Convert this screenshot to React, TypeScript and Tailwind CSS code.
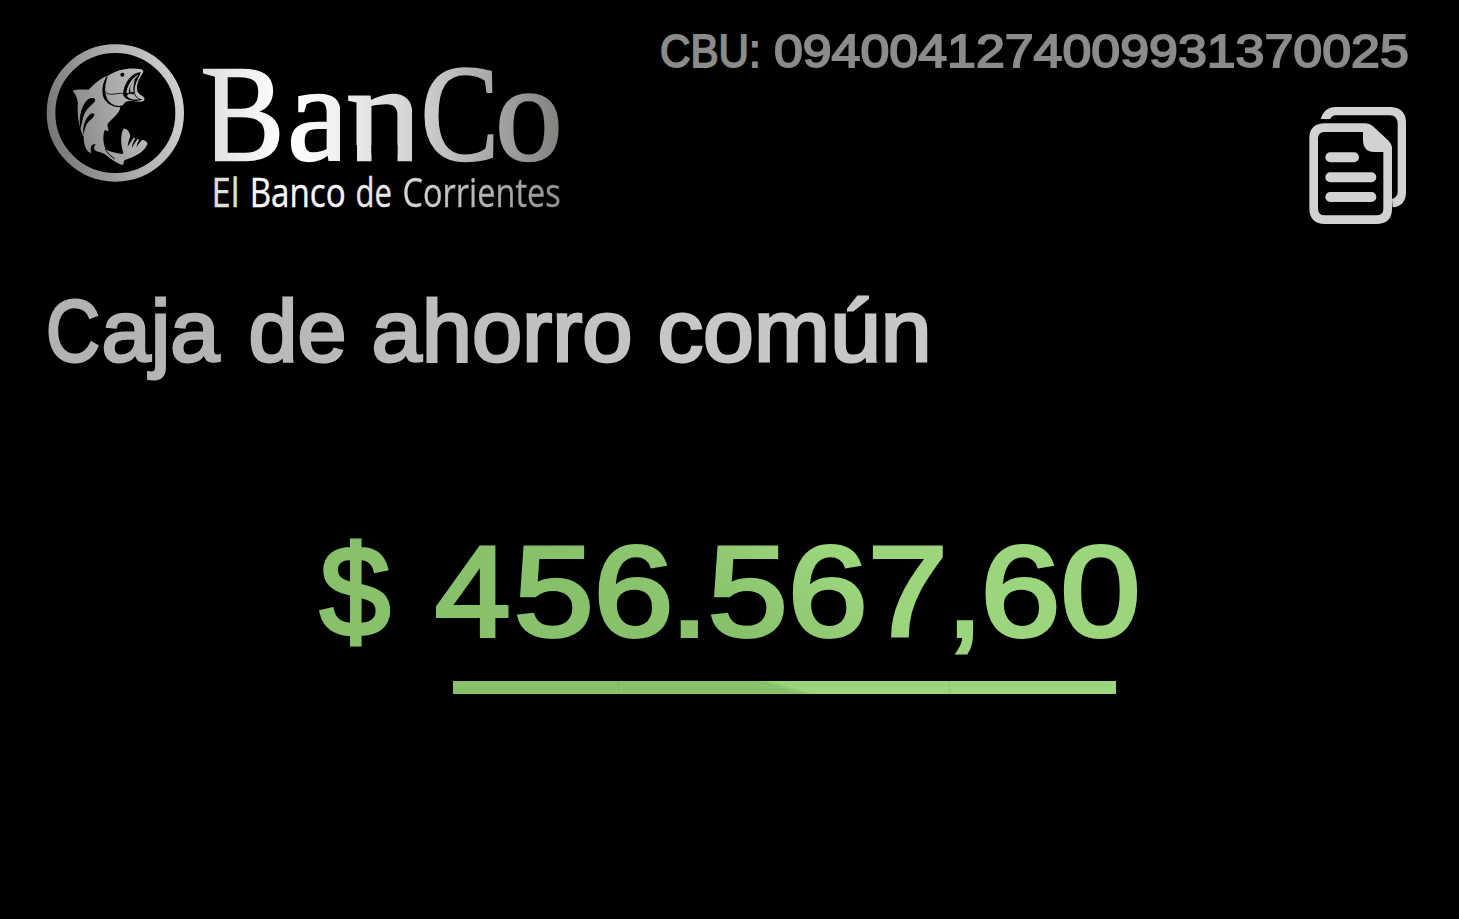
import { useLayoutEffect, useRef, useState } from "react";

type InkProps = { text: string; width: number; className?: string; box?: string };

/** Text stretched horizontally so that its visible glyphs fill `width` pixels. */
function Ink({ text, width, className = "", box = "" }: InkProps) {
  const ref = useRef<HTMLSpanElement>(null);
  const [transform, setTransform] = useState("none");

  useLayoutEffect(() => {
    const el = ref.current;
    const ctx = document.createElement("canvas").getContext("2d");
    if (!el || !ctx) return;
    const style = getComputedStyle(el);
    ctx.font = `${style.fontWeight} ${style.fontSize} ${style.fontFamily}`;
    const m = ctx.measureText(text);
    const stroke = parseFloat(style.getPropertyValue("-webkit-text-stroke-width")) || 0;
    const left = m.actualBoundingBoxLeft + stroke / 2;
    const ink = m.actualBoundingBoxLeft + m.actualBoundingBoxRight + stroke;
    const scale = width / ink;
    setTransform(`translateX(${left * scale}px) scaleX(${scale})`);
  }, [text, width]);

  return (
    <span className={`block h-fit shrink-0 ${box}`} style={{ width }}>
      <span
        ref={ref}
        className={`block w-max origin-left whitespace-pre leading-none ${className}`}
        style={{ transform }}
      >
        {text}
      </span>
    </span>
  );
}

const clip = "bg-clip-text text-transparent";

function FishMark() {
  return (
    <svg viewBox="0 0 450 450" className="h-[150px] w-[150px] shrink-0">
      <defs>
        <linearGradient id="ring" gradientUnits="userSpaceOnUse" x1="30" y1="270" x2="425" y2="180">
          <stop offset="0" stopColor="#787876" />
          <stop offset="0.5" stopColor="#a9a9a8" />
          <stop offset="1" stopColor="#d0d0cf" />
        </linearGradient>
      </defs>
      <circle cx="226" cy="225" r="193" fill="none" stroke="url(#ring)" strokeWidth="26" />
      <g fill="url(#ring)">
        <path d="M98 158C107 153 130 154 146 155C162 137 180 122 202 113C188 130 184 158 190 177C197 195 215 207 241 208C239 228 212 244 202 260L206 280L194 276C187 297 190 317 197 333C210 342 227 346 247 348L250 345C243 324 240 292 250 273C260 270 269 282 271 294C267 307 263 318 263 326C269 316 275 307 281 299L286 300C280 311 276 320 276 329C282 318 288 309 293 303L298 305C293 313 290 320 290 327C296 318 301 311 306 306C314 306 324 312 322 319C314 340 288 356 255 366C249 370 252 378 249 381C233 378 209 360 193 347C181 342 174 343 165 337C160 330 163 323 168 319C154 317 149 327 154 345C140 344 131 320 131 296C121 278 112 244 113 207C116 190 109 171 98 158Z" />
        <path d="M203 114C230 93 276 87 304 94L310 98C310 108 294 120 291 145C289 160 294 167 310 176C317 183 314 190 300 191C281 190 264 185 254 194C249 207 229 206 216 198C200 189 194 168 196 142Z" />
      </g>
      <g fill="#000">
        <path d="M121 273C117 247 119 207 144 184C156 176 171 181 164 191C151 205 132 216 127 249Z" />
        <path d="M131 291C125 263 141 231 156 226C169 226 163 237 151 246C139 256 135 266 131 291Z" />
        <path d="M302 102C278 105 257 126 250 160C246 174 254 180 266 185C281 190 297 190 308 184C295 182 285 176 284 158C283 135 300 116 302 102Z" />
        <circle cx="247" cy="110" r="6" />
      </g>
      <g fill="url(#ring)">
        <path d="M297 109C277 119 263 139 259 164L266 166C267 143 283 124 297 109Z" />
        <path d="M284 125C272 137 268 153 272 163C280 160 284 166 286 173C276 166 264 165 261 174C267 185 285 186 298 184C287 178 281 172 280 157C279 144 283 137 284 125Z" />
      </g>
      <path d="M199 164C210 174 228 165 249 166" fill="none" stroke="#000" strokeWidth="2.5" />
      <path d="M195 333Q203 349 224 363" fill="none" stroke="#000" strokeWidth="3" />
    </svg>
  );
}

function CopyIcon() {
  return (
    <svg viewBox="0 0 345 420" className="h-[140px] w-[115px]">
      <path
        d="M195 98H72Q41 100 41 130V342Q43 374 74 374H232Q263 372 263 342V158Q262 152 257 147L210 103Q204 98 195 98Z"
        fill="none"
        stroke="#d2d2d0"
        strokeWidth="26"
        strokeLinejoin="round"
      />
      <path d="M189 98V136Q190 171 222 171H265L250 142L206 98Z" fill="#d2d2d0" />
      <path
        d="M62 72C69 48 85 36 106 36H274Q316 39 318 80V294Q316 334 278 337L276 312Q293 307 293 290V84Q291 62 270 61H107Q96 62 90 72Z"
        fill="#d2d2d0"
      />
      <path d="M91 186.500H162M91 247H214M91 306H214" stroke="#d2d2d0" strokeWidth="30" strokeLinecap="round" />
    </svg>
  );
}

function Brand() {
  return (
    <div className="flex pt-[38px] pl-10">
      <FishMark />
      <div className="pt-[7px] pl-3">
        <div className="flex h-[127px] font-['Liberation_Serif',serif] text-[138px] [-webkit-text-stroke:2.5px_transparent]">
          <Ink
            text="B"
            width={78}
            className={`bg-linear-to-r from-[#dcdcdc] to-white ${clip}`}
            box="[clip-path:polygon(0_0,90px_0,90px_139px,13px_139px,13px_32px,0_28px)]"
          />
          <span className="w-[10px]" />
          <Ink
            text="a"
            width={59}
            className={`bg-linear-to-r from-white to-[#eeeeee] ${clip}`}
            box="-mr-[9px] [clip-path:polygon(0_0,50px_0,50px_139px,0_139px)]"
          />
          <span className="w-2" />
          <Ink
            text="n"
            width={73}
            className={`bg-linear-to-r from-[#ececec] to-[#d0d0d0] ${clip}`}
            box="-mr-[8px] [clip-path:polygon(0_0,64px_0,64px_139px,49.5px_139px,49.5px_100px,23.5px_100px,23.5px_139px,9px_139px,9px_100px,0_100px)]"
          />
          <span className="w-[11px]" />
          <Ink text="C" width={70} className={`bg-linear-to-r from-[#cfcfce] to-[#a4a4a2] ${clip}`} />
          <span className="w-[5px]" />
          <Ink text="o" width={60} className={`bg-linear-to-r from-[#a5a5a4] to-[#80807d] ${clip}`} />
        </div>
        <div className="flex pl-3 font-['Open_Sans',sans-serif] text-[40px] [-webkit-text-stroke:0.4px_transparent]">
          <Ink text="El" width={23} className="text-[#dedede] [-webkit-text-stroke-color:#dedede]" />
          <span className="w-[15px]" />
          <Ink text="Banco" width={92} className="text-[#f8f8f8] [-webkit-text-stroke-color:#f8f8f8]" />
          <span className="w-[13px]" />
          <Ink text="de" width={34} className="text-[#e6e6e6] [-webkit-text-stroke-color:#e6e6e6]" />
          <span className="w-[13px]" />
          <Ink text="Corrientes" width={156} className={`bg-linear-to-r from-[#d8d8d8] to-[#91918f] ${clip}`} />
        </div>
      </div>
    </div>
  );
}

export default function App() {
  return (
    <main className="flex h-[919px] w-[1459px] flex-col overflow-hidden bg-black font-['Liberation_Sans',sans-serif]">
      <header className="flex h-[287px] shrink-0 justify-between">
        <Brand />
        <div className="flex flex-col items-end pt-7 pr-[51px]">
          <div className="flex h-[67px] text-[46px] text-[#8b8b89] [-webkit-text-stroke:1.8px_#8b8b89]">
            <Ink text="CBU:" width={97} />
            <span className="w-4" />
            <Ink text="0940041274009931370025" width={634} />
          </div>
          <div className="-mr-[7px]">
            <CopyIcon />
          </div>
        </div>
      </header>

      <h1 className="flex h-[241px] shrink-0 pl-12 text-[88px] [-webkit-text-stroke:3px_transparent]">
        <Ink text="C" width={51} className="text-[#b2b2b2] [-webkit-text-stroke-color:#b2b2b2]" />
        <span className="w-[4px]" />
        <Ink text="aja" width={118} className="text-[#b4b4b4] [-webkit-text-stroke-color:#b4b4b4]" />
        <span className="w-[29px]" />
        <Ink text="de" width={95} className="text-[#b9b9b8] [-webkit-text-stroke-color:#b9b9b8]" />
        <span className="w-7" />
        <Ink text="ahorro" width={258} className={`bg-linear-to-r from-[#bababa] to-[#c4c4c3] ${clip}`} />
        <span className="w-7" />
        <Ink text="común" width={269} className="text-[#c7c7c6] [-webkit-text-stroke-color:#c7c7c6]" />
      </h1>

      <section className="flex flex-col">
        <div className="flex h-[153px] pl-[319px] text-[128px] [-webkit-text-stroke:4px_transparent]">
          <Ink text="$" width={72} className="text-[#87c16b] [-webkit-text-stroke-color:#87c16b]" />
          <span className="w-11" />
          <Ink text="4" width={74} className="text-[#87c16b] [-webkit-text-stroke-color:#87c16b]" />
          <span className="w-2" />
          <Ink text="56" width={153} className={`bg-linear-45 from-[#87c16b] from-55% to-[#90cb74] ${clip}`} />
          <span className="w-[10px]" />
          <Ink text="." width={18} className="text-[#88c26c] [-webkit-text-stroke-color:#88c26c]" />
          <span className="w-[13px]" />
          <Ink text="567" width={232} className={`bg-linear-45 from-[#87c16b] from-15% to-[#9bd67d] to-60% ${clip}`} />
          <span className="w-[13px]" />
          <Ink text="," width={18} className="text-[#9bd67d] [-webkit-text-stroke-color:#9bd67d]" />
          <span className="w-[11px]" />
          <Ink text="60" width={153} className="text-[#9bd67d] [-webkit-text-stroke-color:#9bd67d]" />
        </div>
        <div className="ml-[452.5px] flex h-[13px] w-[663px]">
          <span className="w-[166.5px] border-r border-[#80b765] bg-[#87c16b]" />
          <span className="w-[331px] border-r border-[#90c775] bg-[linear-gradient(17deg,#87c16b_49%,#9bd67d_53%)]" />
          <span className="grow bg-[#9bd67d]" />
        </div>
      </section>
    </main>
  );
}
